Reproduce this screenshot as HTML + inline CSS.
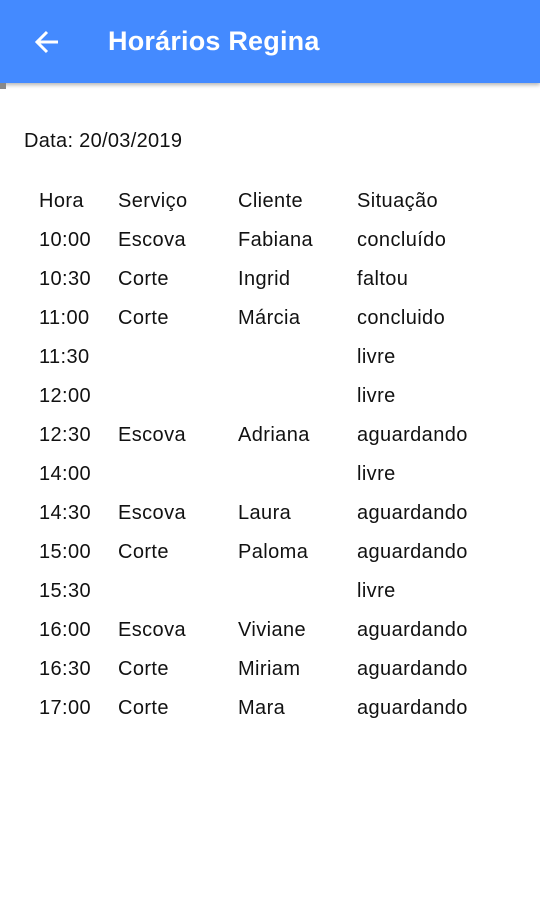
<!DOCTYPE html>
<html><head><meta charset="utf-8"><style>
body{margin:0;width:540px;height:922px;background:#fff;font-family:"Liberation Sans",sans-serif;position:relative;overflow:hidden}
.bar{position:absolute;left:0;top:0;width:540px;height:83px;background:#448aff;box-shadow:0 2px 4px rgba(0,0,0,.3)}
.t{position:absolute;left:108px;top:26px;color:#fff;font-size:27px;font-weight:bold;letter-spacing:.2px}
.dot{position:absolute;left:0;top:83px;width:6px;height:6px;background:#888}
.d{position:absolute;left:24px;top:130px;font-size:20px;color:#111;letter-spacing:.3px}
.r{position:absolute;left:0;height:39px;font-size:20px;color:#111;letter-spacing:.4px}
.r span{position:absolute;top:0;white-space:nowrap}
</style></head><body>
<div class="bar"><svg style="position:absolute;left:34px;top:29px" width="26" height="26" viewBox="0 0 26 26"><path d="M24 13H4M13 3L3 13l10 10" fill="none" stroke="#fff" stroke-width="3"/></svg><div class="t">Horários Regina</div></div>
<div class="dot"></div>
<div class="d">Data: 20/03/2019</div>
<div id="rows"></div>
<script>
var d=[["Hora","Serviço","Cliente","Situação"],["10:00","Escova","Fabiana","concluído"],["10:30","Corte","Ingrid","faltou"],["11:00","Corte","Márcia","concluido"],["11:30","","","livre"],["12:00","","","livre"],["12:30","Escova","Adriana","aguardando"],["14:00","","","livre"],["14:30","Escova","Laura","aguardando"],["15:00","Corte","Paloma","aguardando"],["15:30","","","livre"],["16:00","Escova","Viviane","aguardando"],["16:30","Corte","Miriam","aguardando"],["17:00","Corte","Mara","aguardando"]];
var x=[39,118,238,357],h="";
d.forEach(function(r,i){h+='<div class="r" style="top:'+(190+i*39)+'px">';r.forEach(function(c,j){h+='<span style="left:'+x[j]+'px">'+c+'</span>'});h+='</div>'});
document.getElementById("rows").innerHTML=h;
</script>
</body></html>
